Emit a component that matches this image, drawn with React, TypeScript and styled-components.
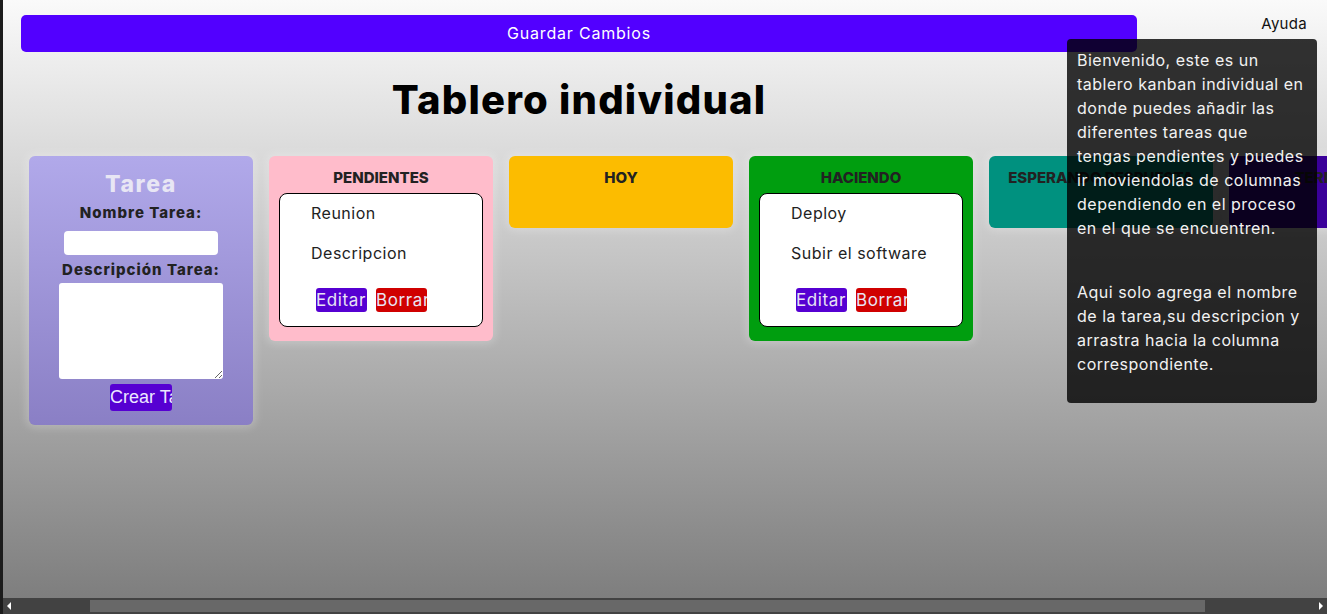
import React, { useLayoutEffect, useRef } from "react";
import styled, { createGlobalStyle } from "styled-components";

const GlobalStyle = createGlobalStyle`
  html, body { margin: 0; padding: 0; height: 100%; overflow: hidden; }
  body { font-family: Inter, "Noto Sans", sans-serif; letter-spacing: 0.5px; }
  * { box-sizing: border-box; }
`;

const Screen = styled.div`
  height: 614px;
  display: flex;
  flex-direction: column;
  border-left: 3px solid #1c1c1c;
  background: #424242;
  position: relative;
`;

const Viewport = styled.div`
  flex: 1;
  min-height: 0;
  overflow: hidden;
  background: linear-gradient(#fafafa, #7e7e7e);
`;

const ScrollBar = styled.div`
  flex: 0 0 16px;
  display: flex;
  align-items: stretch;
  background: #424242;
`;

const ScrollArrow = styled.div<{ $dir: "left" | "right" }>`
  flex: 0 0 16px;
  display: flex;
  align-items: center;
  justify-content: center;
  &::before {
    content: "";
    width: 0;
    height: 0;
    border-top: 4px solid transparent;
    border-bottom: 4px solid transparent;
    ${(p) =>
      p.$dir === "left"
        ? "border-right: 4px solid #fff; margin-left: -4px;"
        : "border-left: 4px solid #fff; margin-right: -4px;"}
  }
`;

const ScrollTrack = styled.div`
  flex: 1;
  padding: 2px 0 2px 71px;
`;

const ScrollThumb = styled.div`
  width: 1115px;
  height: 100%;
  background: #686868;
`;

const Board = styled.div`
  width: max-content;
  padding-left: 81px;
  display: flex;
  flex-direction: column;
`;

const Header = styled.header`
  width: 1158px;
  padding: 15px 21px 0;
`;

const SaveButton = styled.button`
  display: block;
  width: 100%;
  height: 37px;
  padding: 0 0 2px;
  border: none;
  border-radius: 5px;
  background: #5200ff;
  color: #fff;
  font-family: Inter, sans-serif;
  font-size: 16px;
  letter-spacing: 0.8px;
`;

const Title = styled.h1`
  width: 1158px;
  margin: 24px 0 32px;
  text-align: center;
  font-size: 40px;
  line-height: 48px;
  font-weight: 800;
  letter-spacing: 1.2px;
  color: #000;
`;

const Columns = styled.div`
  display: flex;
  align-items: flex-start;
  gap: 16px;
  padding-left: 29px;
`;

const Panel = styled.section<{ $bg: string }>`
  width: 224px;
  border-radius: 6px;
  background: ${(p) => p.$bg};
  box-shadow: 0 0 8px 3px rgba(255, 255, 255, 0.22);
`;

const FormPanel = styled(Panel)`
  display: flex;
  flex-direction: column;
  align-items: center;
  padding: 14px 0 14px;
`;

const FormTitle = styled.h2`
  margin: 0;
  font-size: 23px;
  line-height: 28px;
  font-weight: 800;
  letter-spacing: 1.6px;
  color: #e8e6f4;
`;

const FieldLabel = styled.label<{ $top: number }>`
  display: block;
  margin-top: ${(p) => p.$top}px;
  font-size: 15px;
  line-height: 20px;
  font-weight: 800;
  letter-spacing: 1px;
  color: #222;
`;

const NameInput = styled.input`
  margin-top: 8px;
  width: 154px;
  height: 24px;
  border: none;
  border-radius: 4px;
  background: #fff;
`;

const DescInput = styled.textarea`
  margin-top: 3px;
  width: 164px;
  height: 96px;
  border: none;
  border-radius: 3px;
  background: #fff;
  resize: both;
  display: block;
`;

const CreateButton = styled.button`
  margin-top: 5px;
  width: 62px;
  height: 27px;
  padding: 0;
  border: none;
  border-radius: 3px;
  background: #5600d2;
  color: #ece8ff;
  font-family: "Liberation Sans", Arial, sans-serif;
  font-size: 18px;
  letter-spacing: 0;
  white-space: nowrap;
  overflow: hidden;
  text-align: left;
`;

const Column = styled(Panel)`
  padding: 11px 10px 14px;
`;

const ColumnTitle = styled.h3`
  margin: 0 0 4px;
  text-align: center;
  white-space: nowrap;
  font-size: 15px;
  line-height: 22px;
  font-weight: 800;
  letter-spacing: 0;
  color: #222;
`;

const DropZone = styled.div`
  min-height: 21px;
`;

const TaskCard = styled.article`
  background: #fff;
  border: 1px solid #000;
  border-radius: 8px;
  padding: 7px 0 14px 31px;
`;

const TaskText = styled.p<{ $gap: number }>`
  margin: 0 0 ${(p) => p.$gap}px;
  font-size: 16px;
  line-height: 24px;
  color: #222;
`;

const Actions = styled.div`
  display: flex;
  gap: 9px;
  padding-left: 5px;
`;

const ActionButton = styled.button<{ $bg: string }>`
  width: 51px;
  height: 24px;
  padding: 0;
  border: none;
  border-radius: 3px;
  background: ${(p) => p.$bg};
  color: #e8e4f4;
  font-family: Inter, sans-serif;
  font-size: 17px;
  letter-spacing: 0.6px;
  white-space: nowrap;
  overflow: hidden;
  text-align: left;
`;

const HelpLink = styled.span`
  position: absolute;
  top: 14px;
  right: 20px;
  font-size: 15px;
  line-height: 20px;
  letter-spacing: 0.3px;
  color: #111;
`;

const Tooltip = styled.div`
  position: absolute;
  top: 39px;
  right: 10px;
  width: 250px;
  height: 364px;
  padding: 9px 10px;
  border-radius: 4px;
  background: rgba(0, 0, 0, 0.8);
  color: #f2f2f2;
  font-size: 16px;
  line-height: 24px;
  white-space: nowrap;
`;

const TipParagraph = styled.p`
  margin: 0 0 40px;
`;

type Task = { title: string; desc: string };
type Col = { name: string; color: string; tasks: Task[] };

const columns: Col[] = [
  { name: "PENDIENTES", color: "#ffbccb", tasks: [{ title: "Reunion", desc: "Descripcion" }] },
  { name: "HOY", color: "#fcbc00", tasks: [] },
  { name: "HACIENDO", color: "#009e0f", tasks: [{ title: "Deploy", desc: "Subir el software" }] },
  { name: "ESPERANDO RESPUESTA", color: "#00917f", tasks: [] },
  { name: "TERMINADO", color: "#3a0099", tasks: [] },
];

const helpIntro = [
  "Bienvenido, este es un",
  "tablero kanban individual en",
  "donde puedes añadir las",
  "diferentes tareas que",
  "tengas pendientes y puedes",
  "ir moviendolas de columnas",
  "dependiendo en el proceso",
  "en el que se encuentren.",
];

const helpHowTo = [
  "Aqui solo agrega el nombre",
  "de la tarea,su descripcion y",
  "arrastra hacia la columna",
  "correspondiente.",
];

const Lines = ({ lines }: { lines: string[] }) => (
  <>
    {lines.map((l, i) => (
      <React.Fragment key={i}>
        {i > 0 && <br />}
        {l}
      </React.Fragment>
    ))}
  </>
);

export default function App() {
  const ref = useRef<HTMLDivElement>(null);
  useLayoutEffect(() => {
    if (ref.current) ref.current.scrollLeft = 84;
  }, []);

  return (
    <>
      <GlobalStyle />
      <Screen>
        <Viewport ref={ref}>
          <Board>
            <Header>
              <SaveButton>Guardar Cambios</SaveButton>
            </Header>
            <Title>Tablero individual</Title>
            <Columns>
              <FormPanel $bg="linear-gradient(#b1a9ea, #8a7fc5)">
                <FormTitle>Tarea</FormTitle>
                <FieldLabel $top={5}>Nombre Tarea:</FieldLabel>
                <NameInput />
                <FieldLabel $top={5}>Descripción Tarea:</FieldLabel>
                <DescInput />
                <CreateButton>Crear Tarea</CreateButton>
              </FormPanel>
              {columns.map((c) => (
                <Column key={c.name} $bg={c.color}>
                  <ColumnTitle>{c.name}</ColumnTitle>
                  <DropZone>
                    {c.tasks.map((t) => (
                      <TaskCard key={t.title}>
                        <TaskText $gap={16}>{t.title}</TaskText>
                        <TaskText $gap={23}>{t.desc}</TaskText>
                        <Actions>
                          <ActionButton $bg="#5600d2">Editar</ActionButton>
                          <ActionButton $bg="#d00000">Borrar</ActionButton>
                        </Actions>
                      </TaskCard>
                    ))}
                  </DropZone>
                </Column>
              ))}
            </Columns>
          </Board>
        </Viewport>
        <ScrollBar>
          <ScrollArrow $dir="left" />
          <ScrollTrack>
            <ScrollThumb />
          </ScrollTrack>
          <ScrollArrow $dir="right" />
        </ScrollBar>
        <HelpLink>Ayuda</HelpLink>
        <Tooltip>
          <TipParagraph>
            <Lines lines={helpIntro} />
          </TipParagraph>
          <TipParagraph>
            <Lines lines={helpHowTo} />
          </TipParagraph>
        </Tooltip>
      </Screen>
    </>
  );
}
